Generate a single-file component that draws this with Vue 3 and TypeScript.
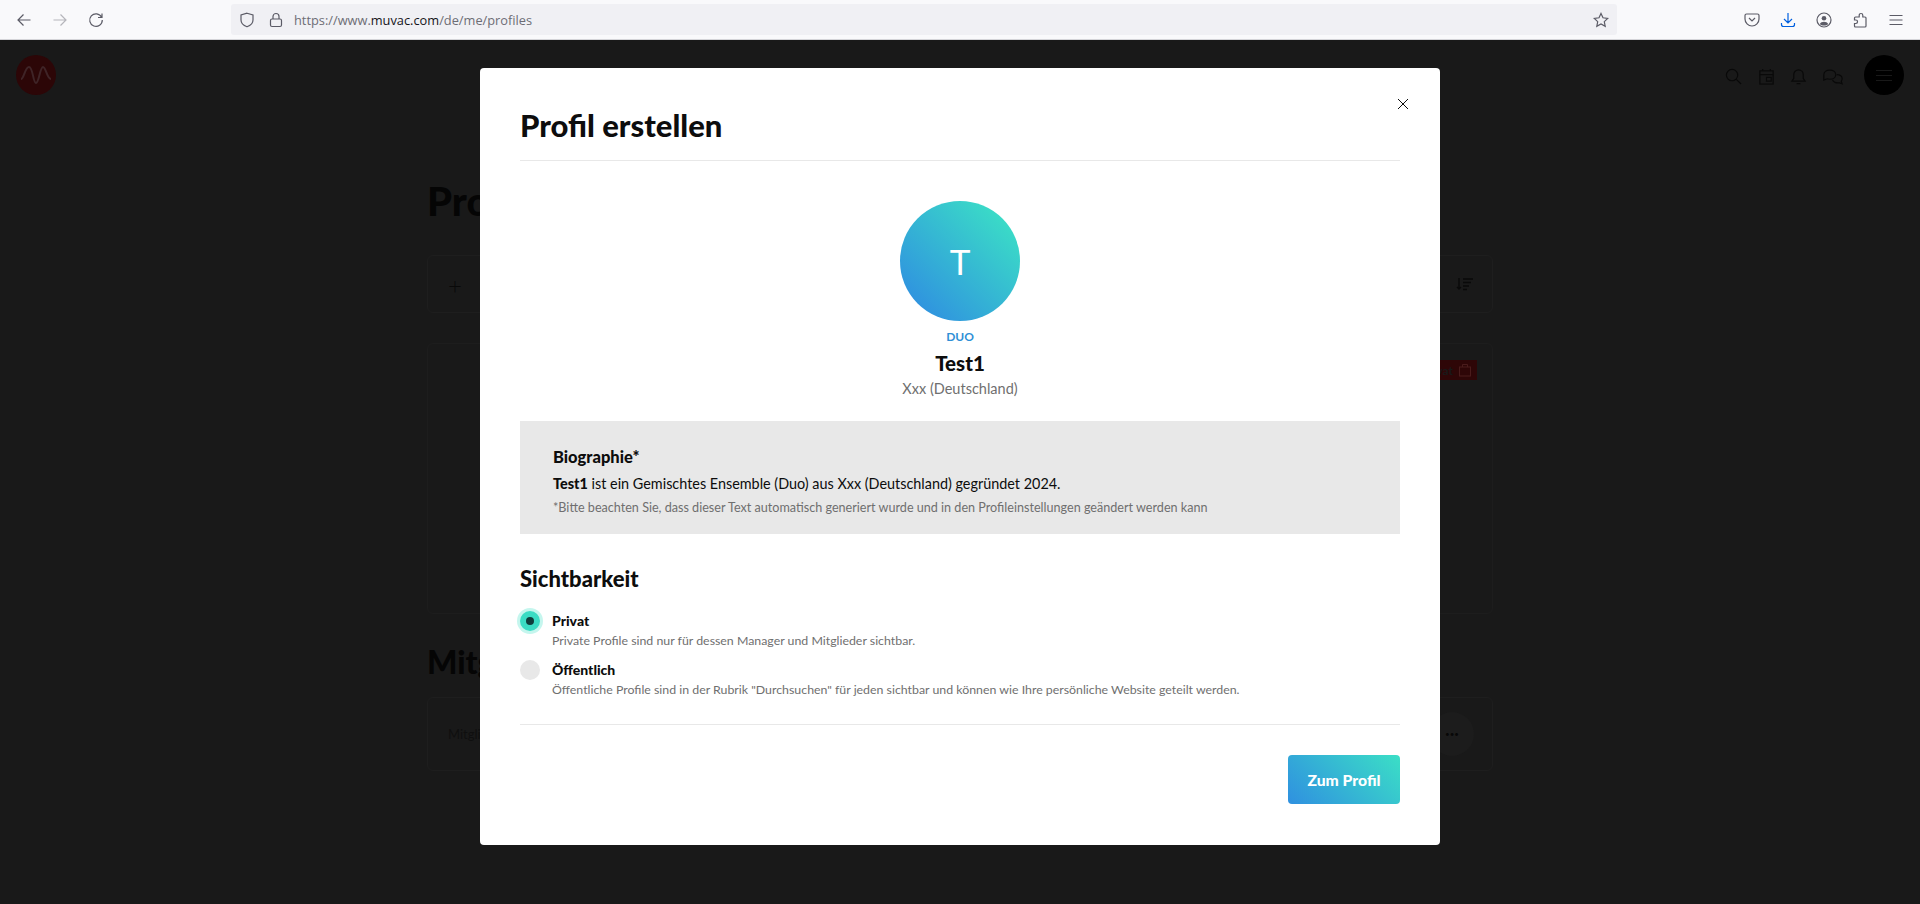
<template>
  <div class="browser">
    <header class="toolbar">
      <div class="nav-btns">
        <svg class="tb-icon" viewBox="0 0 16 16"><path d="M14.5 8H2M7.5 2.5 2 8l5.5 5.5" /></svg>
        <svg class="tb-icon is-disabled" viewBox="0 0 16 16"><path d="M1.5 8H14M8.5 2.5 14 8l-5.5 5.5" /></svg>
        <svg class="tb-icon" viewBox="0 0 16 16"><path d="M13.6 5.2A6.3 6.3 0 1 0 14.3 8M14 1.5v4h-4" /></svg>
      </div>
      <div class="urlbar">
        <svg class="tb-icon shield" viewBox="0 0 16 16"><path d="M8 1.2 14 3v5c0 3.4-2.6 5.6-6 6.8C4.600 13.600 2 11.400 2 8V3z" /></svg>
        <svg class="tb-icon lock" viewBox="0 0 16 16"><rect x="2.500" y="7" width="11" height="7.500" rx="1.500" /><path d="M5 7V4.500a3 3 0 0 1 6 0V7" /></svg>
        <span class="url">https://www.<b>muvac.com</b>/de/me/profiles</span>
        <svg class="tb-icon star" viewBox="0 0 16 16"><path d="m8 1.500 2 4.300 4.700.6-3.400 3.200.9 4.700L8 12l-4.200 2.300.9-4.700L1.300 6.400 6 5.800z" /></svg>
      </div>
      <div class="tb-right">
        <svg class="tb-icon" viewBox="0 0 16 16"><path d="M2.500 2h11A1.500 1.500 0 0 1 15 3.500V7a7 7 0 0 1-14 0V3.500A1.500 1.500 0 0 1 2.500 2z" /><path d="m5 6 3 3 3-3" /></svg>
        <svg class="tb-icon is-blue" viewBox="0 0 16 16"><path d="M8 1v9.500M4 7l4 4 4-4M1.500 11v1.500a2 2 0 0 0 2 2h9a2 2 0 0 0 2-2V11" /></svg>
        <svg class="tb-icon" viewBox="0 0 16 16"><circle cx="8" cy="8" r="7" /><circle class="solid" cx="8" cy="6.200" r="2.300" /><path class="solid" d="M3.800 12c.8-1.500 2.400-2.200 4.200-2.200s3.400.7 4.200 2.200c-1 1-2.500 1.600-4.200 1.600S4.800 13 3.800 12z" /></svg>
        <svg class="tb-icon" viewBox="0 0 16 16"><path d="M9 1.500a1.800 1.800 0 0 1 1.800 1.800V5H13a1 1 0 0 1 1 1v8a1 1 0 0 1-1 1H3.500a1 1 0 0 1-1-1v-2.500h1.300a1.700 1.700 0 0 0 0-3.500H2.500V6a1 1 0 0 1 1-1h3.700V3.300A1.800 1.800 0 0 1 9 1.500z" /></svg>
        <svg class="tb-icon" viewBox="0 0 16 16"><path d="M1.500 3.500h13M1.500 8h13M1.500 12.500h13" /></svg>
      </div>
    </header>

    <div class="page">
      <div class="site-header">
        <div class="logo">
          <svg viewBox="0 0 40 40"><path d="M5 24c3 0 4-12 8-12s4 16 7 16 4-16 7-16 4 12 8 12" /></svg>
        </div>
        <div class="site-actions">
          <svg class="site-icon" viewBox="0 0 18 18"><circle cx="7.500" cy="7.500" r="6" /><path d="m12 12 5 5" /></svg>
          <svg class="site-icon" viewBox="0 0 18 18"><rect x="2" y="3" width="14" height="14" /><path d="M2 7h14M5 1v2M13 1v2M9 10h5v4H9z" /></svg>
          <svg class="site-icon" viewBox="0 0 18 18"><path d="M2 14h14l-2-3V7A5 5 0 0 0 4 7v4zM7 16.500h4" /></svg>
          <svg class="site-icon chat" viewBox="0 0 24 18"><path d="M2 7c0-3 3-5 6.500-5s6.500 2 6.500 5-3 5-6.500 5c-1 0-2-.2-3-.5L2 13z" /><path d="M16 7c3 0 6 1.500 6 4.500 0 1.200-.5 2-1 2.800l1 2.700-3.500-1.200c-3 .8-6.500-.8-7-3" /></svg>
          <div class="menu-btn"><span /><span /><span /></div>
        </div>
      </div>

      <main class="content">
        <h1 class="page-title">Profile</h1>
        <section class="toolbar-card">
          <span class="plus">+</span>
          <svg class="sort-icon" viewBox="0 0 18 14"><path d="M3 1v11M1 10l2 2 2-2M7 2h10M7 5.500h8M7 9h6M7 12.500h4" /></svg>
        </section>
        <section class="profile-card">
          <span class="badge">Privat
            <svg viewBox="0 0 14 14"><rect x="1.500" y="4" width="11" height="9" /><path d="M4.500 4V1.500h5V4" /></svg>
          </span>
        </section>
        <h2 class="page-title members">Mitglieder</h2>
        <section class="member-row">
          <span class="member-name">Mitglied</span>
          <span class="more">•••</span>
        </section>
      </main>
    </div>

    <div class="modal-layer">
      <div class="modal">
        <button type="button" class="close-btn" aria-label="Schließen">
          <svg viewBox="0 0 12 12"><path d="m1 1 10 10M11 1 1 11" /></svg>
        </button>
        <h2 class="modal-title">Profil erstellen</h2>

        <div class="summary">
          <div class="avatar">T</div>
          <span class="kind">DUO</span>
          <strong class="name">Test1</strong>
          <span class="place">Xxx (Deutschland)</span>
        </div>

        <div class="bio">
          <h3 class="bio-title">Biographie*</h3>
          <p class="bio-text"><b>Test1</b> ist ein Gemischtes Ensemble (Duo) aus Xxx (Deutschland) gegründet 2024.</p>
          <p class="bio-note">*Bitte beachten Sie, dass dieser Text automatisch generiert wurde und in den Profileinstellungen geändert werden kann</p>
        </div>

        <h3 class="section-title">Sichtbarkeit</h3>
        <div class="options">
          <label v-for="option in options" :key="option.value" class="option">
            <input v-model="visibility" class="radio-input" type="radio" :value="option.value" />
            <span class="radio" :class="{ 'is-on': visibility === option.value }" />
            <span class="option-copy">
              <span class="option-label">{{ option.label }}</span>
              <span class="option-help">{{ option.help }}</span>
            </span>
          </label>
        </div>

        <div class="actions">
          <button type="button" class="submit-btn">Zum Profil</button>
        </div>
      </div>
    </div>
  </div>
</template>

<script setup lang="ts">
import { ref } from 'vue'

const visibility = ref('private')

const options = [
  {
    value: 'private',
    label: 'Privat',
    help: 'Private Profile sind nur für dessen Manager und Mitglieder sichtbar.',
  },
  {
    value: 'public',
    label: 'Öffentlich',
    help: 'Öffentliche Profile sind in der Rubrik "Durchsuchen" für jeden sichtbar und können wie Ihre persönliche Website geteilt werden.',
  },
]
</script>

<style>
html,
body {
  margin: 0;
  background: #191919;
}
</style>

<style scoped>
.browser {
  position: relative;
  height: 904px;
  overflow: hidden;
  font-family: Lato, "Liberation Sans", sans-serif;
  color: #0d0d0d;
}

.toolbar {
  display: flex;
  align-items: center;
  height: 39px;
  border-bottom: 1px solid #d4d4d8;
  background: #f9f9fb;
  box-sizing: content-box;
}

.tb-icon {
  width: 16px;
  height: 16px;
  flex-shrink: 0;
  fill: none;
  stroke: #5b5b66;
  stroke-width: 1.2;
}

.tb-icon .solid {
  fill: #5b5b66;
  stroke: none;
}

.tb-icon.is-disabled {
  stroke: #b5b5bb;
}

.tb-icon.is-blue {
  stroke: #0060df;
}

.nav-btns {
  display: flex;
  gap: 20px;
  width: 231px;
  padding-left: 16px;
  box-sizing: border-box;
}

.urlbar {
  display: flex;
  align-items: center;
  width: 1386px;
  height: 31px;
  padding: 0 8px;
  box-sizing: border-box;
  background: #f0f0f4;
  border-radius: 3px;
}

.shield {
  margin-right: 13px;
}

.lock {
  margin-right: 10px;
}

.url {
  flex: 1;
  font-family: "Open Sans", sans-serif;
  font-size: 12.8px;
  color: #6d6d75;
}

.url b {
  font-weight: 400;
  color: #15141a;
}

.tb-right {
  display: flex;
  gap: 20px;
  margin-left: 127px;
}

.page {
  height: 864px;
}

.site-header {
  display: flex;
  align-items: center;
  justify-content: space-between;
  height: 70px;
  padding: 0 16px;
}

.logo {
  width: 40px;
  height: 40px;
  border-radius: 50%;
  background: #2c0607;
}

.logo svg {
  display: block;
  fill: none;
  stroke: #3f2427;
  stroke-width: 2;
}

.site-actions {
  display: flex;
  align-items: center;
  gap: 15px;
}

.site-icon {
  width: 17px;
  height: 17px;
  margin-top: 2px;
  fill: none;
  stroke: #090909;
  stroke-width: 1.300;
}

.site-icon:first-child {
  margin-right: 1px;
}

.site-icon.chat {
  width: 22px;
  margin-right: 5px;
}

.menu-btn {
  display: flex;
  flex-direction: column;
  justify-content: center;
  gap: 4px;
  width: 40px;
  height: 40px;
  padding: 0 12px;
  box-sizing: border-box;
  border-radius: 50%;
  background: #000;
}

.menu-btn span {
  height: 1px;
  background: #191919;
}

.content {
  width: 1066px;
  margin: 0 auto;
  padding-top: 67px;
}

.page-title {
  margin: 0;
  font-size: 40px;
  font-weight: 900;
  line-height: 48px;
  color: #050505;
}

.toolbar-card {
  display: flex;
  align-items: center;
  justify-content: space-between;
  height: 56px;
  margin-top: 30px;
  padding: 0 18px 0 20px;
  border: 1px solid #1e1e1e;
  border-radius: 6px;
}

.plus {
  font-size: 24px;
  font-weight: 300;
  color: #090909;
}

.sort-icon {
  width: 18px;
  height: 14px;
  fill: none;
  stroke: #090909;
  stroke-width: 1.300;
}

.profile-card {
  display: flex;
  justify-content: flex-end;
  align-items: flex-start;
  height: 271px;
  margin-top: 30px;
  padding-top: 16px;
  padding-right: 15px;
  box-sizing: border-box;
  border: 1px solid #1d1d1d;
  border-radius: 6px;
}

.badge {
  display: flex;
  align-items: center;
  gap: 5px;
  height: 20px;
  padding: 0 5px;
  background: #2e0607;
  font-size: 12px;
  font-weight: 700;
  color: #191919;
}

.badge svg {
  width: 14px;
  height: 14px;
  fill: none;
  stroke: #4a1c1c;
}

.page-title.members {
  margin-top: 28px;
  font-size: 32px;
  line-height: 40px;
}

.member-row {
  display: flex;
  align-items: center;
  justify-content: space-between;
  height: 72px;
  margin-top: 15px;
  padding: 0 18px 0 20px;
  border: 1px solid #1e1e1e;
  border-radius: 6px;
}

.member-name {
  font-size: 13px;
  color: #0f0f0f;
}

.more {
  display: flex;
  align-items: center;
  justify-content: center;
  width: 44px;
  height: 44px;
  border-radius: 50%;
  background: #1c1c1c;
  font-size: 8px;
  color: #070707;
}

.modal-layer {
  position: absolute;
  inset: 0;
  display: flex;
  justify-content: center;
  align-items: flex-start;
  padding-top: 68px;
}

.modal {
  position: relative;
  width: 960px;
  height: 777px;
  padding: 39px 40px 0;
  box-sizing: border-box;
  border-radius: 4px;
  background: #fff;
}

.close-btn {
  position: absolute;
  top: 30px;
  right: 31px;
  width: 12px;
  height: 12px;
  padding: 0;
  border: 0;
  background: none;
}

.close-btn svg {
  display: block;
  fill: none;
  stroke: #0d0d0d;
  stroke-width: 1;
}

.modal-title {
  margin: 0;
  padding-bottom: 17px;
  border-bottom: 1px solid #e8e8e8;
  font-size: 31px;
  font-weight: 900;
  line-height: 36px;
}

.summary {
  display: flex;
  flex-direction: column;
  align-items: center;
  padding-top: 40px;
}

.avatar {
  display: flex;
  align-items: center;
  justify-content: center;
  width: 120px;
  height: 120px;
  border-radius: 50%;
  background: linear-gradient(45deg, #2f90e0 10%, #3bdfc6 90%);
  font-size: 35px;
  color: #fff;
}

.kind {
  margin-top: 9px;
  font-size: 12px;
  font-weight: 700;
  line-height: 14px;
  color: #2f8fd6;
}

.name {
  margin-top: 5px;
  font-size: 20.500px;
  font-weight: 900;
  line-height: 28px;
}

.place {
  margin-top: 2px;
  font-size: 14.500px;
  line-height: 20px;
  color: #6f6f6f;
}

.bio {
  height: 113px;
  margin-top: 22px;
  padding: 25px 33px 0;
  box-sizing: border-box;
  background: #e8e8e8;
}

.bio-title {
  margin: 0;
  font-size: 16.500px;
  font-weight: 900;
  line-height: 22px;
}

.bio-text {
  margin: 5px 0 0;
  font-size: 14.400px;
  line-height: 22px;
}

.bio-text b {
  font-weight: 900;
}

.bio-note {
  margin: 4px 0 0;
  font-size: 12.600px;
  line-height: 18px;
  color: #6f6f6f;
}

.section-title {
  margin: 31px 0 0;
  font-size: 22px;
  font-weight: 900;
  line-height: 28px;
}

.options {
  display: flex;
  flex-direction: column;
  gap: 9px;
  margin-top: 18px;
}

.option {
  position: relative;
  display: flex;
  align-items: flex-start;
  gap: 12px;
}

.radio-input {
  position: absolute;
  opacity: 0;
  pointer-events: none;
}

.radio {
  position: relative;
  flex-shrink: 0;
  width: 20px;
  height: 20px;
  border-radius: 50%;
  background: #e8e8e8;
}

.radio.is-on {
  background: #3bdcc4;
  box-shadow: 0 0 0 3px #c5f6ee;
}

.radio.is-on::after {
  content: '';
  position: absolute;
  top: 6px;
  left: 6px;
  width: 8px;
  height: 8px;
  border-radius: 50%;
  background: #0f3d3c;
}

.option-copy {
  display: flex;
  flex-direction: column;
}

.option-label {
  font-size: 14px;
  font-weight: 900;
  line-height: 20px;
}

.option-help {
  font-size: 12.350px;
  line-height: 20px;
  color: #6f6f6f;
}

.actions {
  display: flex;
  justify-content: flex-end;
  margin-top: 24px;
  padding-top: 30px;
  border-top: 1px solid #e8e8e8;
}

.submit-btn {
  width: 112px;
  height: 49px;
  border: 0;
  border-radius: 4px;
  background: linear-gradient(45deg, #2f90e0, #3bdfc6);
  font-family: inherit;
  font-size: 15.700px;
  font-weight: 900;
  color: #fff;
}
</style>
